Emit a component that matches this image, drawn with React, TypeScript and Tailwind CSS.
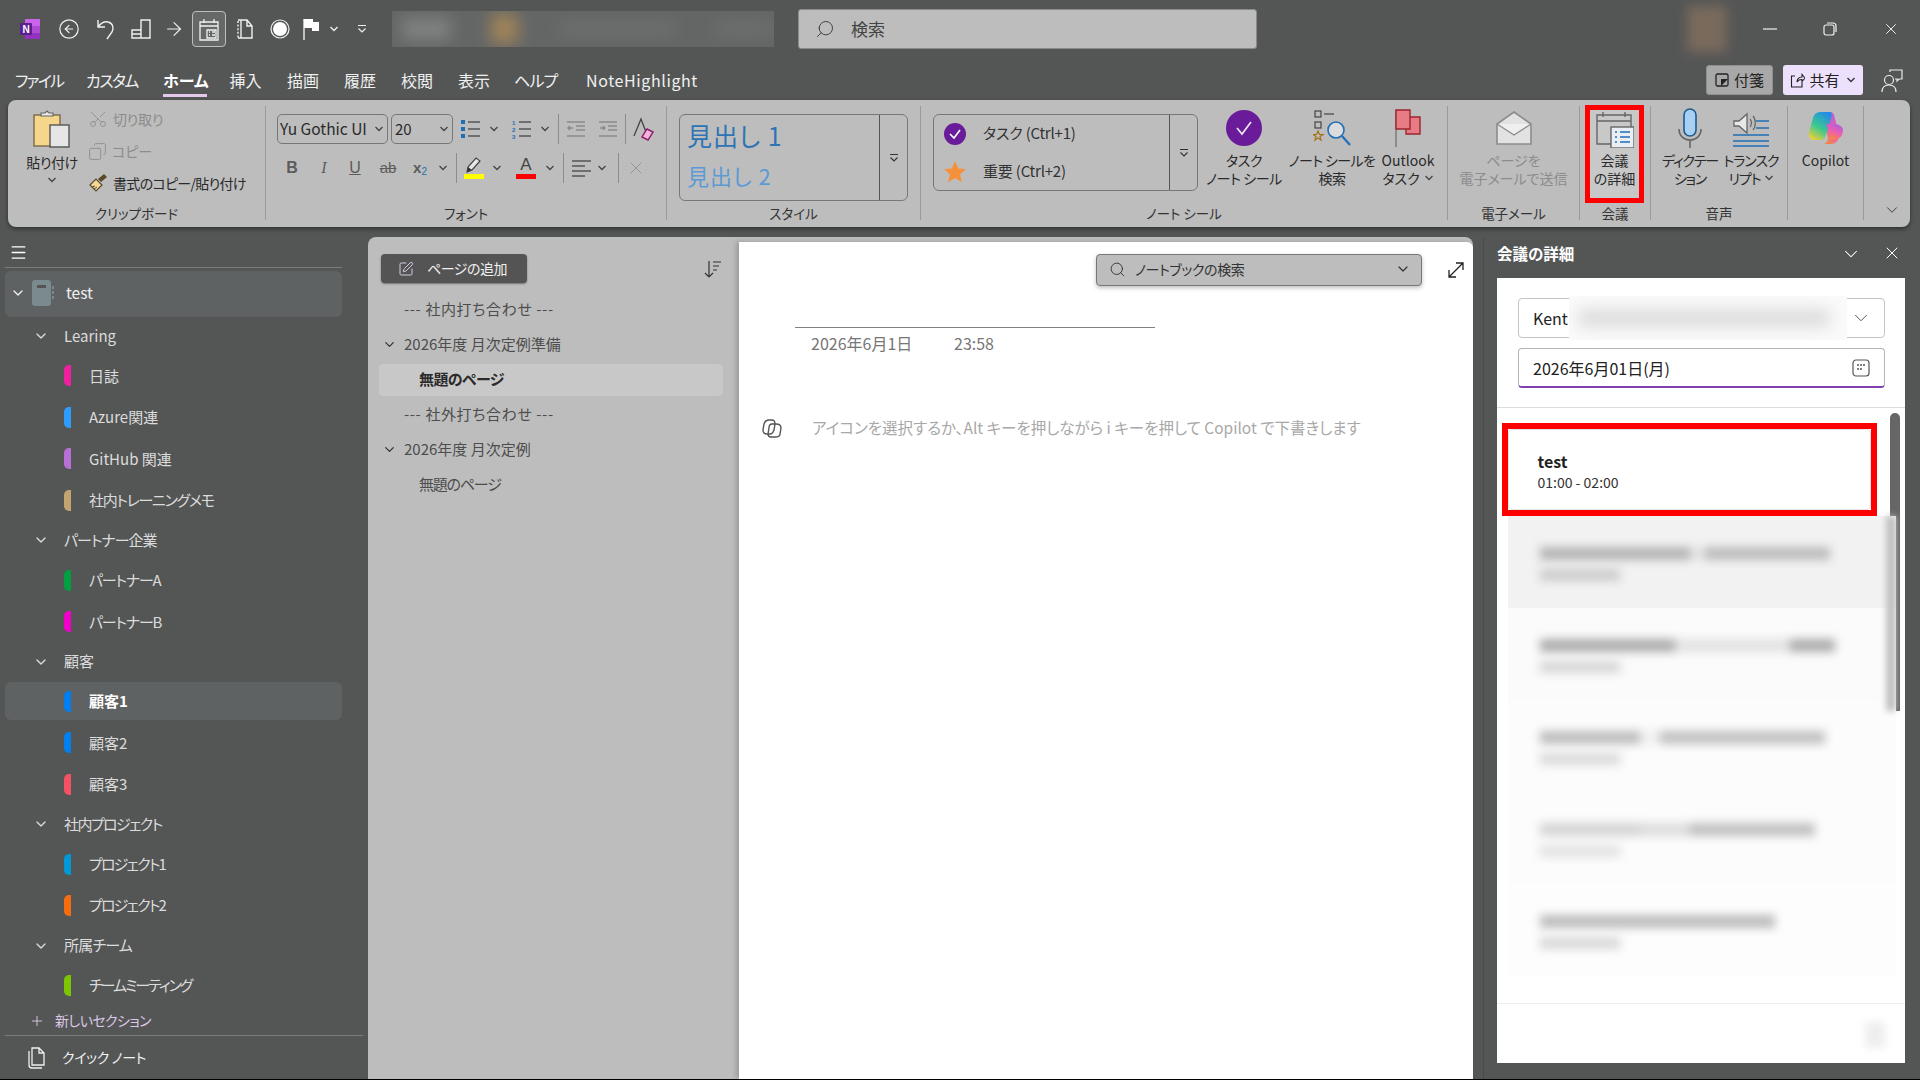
import React from 'react';
import { ArrowRight, ChevronDown, CircleArrowLeft, Copy, Menu, Plus, Scissors, Search, SquarePen, X } from 'lucide-react';

const tabs = [
  { label: 'ファイル', cls: 'ml-[15px] w-[47px] tracking-[-1.8px]' },
  { label: 'カスタム', cls: 'ml-[24px] w-[51px] tracking-[-1.6px]' },
  { label: 'ホーム', cls: 'ml-[26px] w-[44px]', active: true },
  { label: '挿入', cls: 'ml-[22px] w-[33px]' },
  { label: '描画', cls: 'ml-[24px] w-[34px]' },
  { label: '履歴', cls: 'ml-[23px] w-[34px]' },
  { label: '校閲', cls: 'ml-[23px] w-[34px]' },
  { label: '表示', cls: 'ml-[23px] w-[34px]' },
  { label: 'ヘルプ', cls: 'ml-[23px] w-[43px] tracking-[-0.8px]' },
  { label: 'NoteHighlight', cls: 'ml-[29px] w-[112px] tracking-[0.6px]' },
];

const sections = [
  { type: 'group', label: 'Learing' },
  { label: '日誌', color: 'bg-[#f01fa0]' },
  { label: 'Azure関連', color: 'bg-[#2e9bff]' },
  { label: 'GitHub 関連', color: 'bg-[#b86fd6]' },
  { label: '社内トレーニングメモ', color: 'bg-[#c4a373]', track: 'tracking-[-1.3px]' },
  { type: 'group', label: 'パートナー企業', track: 'tracking-[-1px]' },
  { label: 'パートナーA', color: 'bg-[#00a040]', track: 'tracking-[-1.2px]' },
  { label: 'パートナーB', color: 'bg-[#f000c8]', track: 'tracking-[-1.2px]' },
  { type: 'group', label: '顧客' },
  { label: '顧客1', color: 'bg-[#0080f0]', active: true },
  { label: '顧客2', color: 'bg-[#0080f0]' },
  { label: '顧客3', color: 'bg-[#f25262]' },
  { type: 'group', label: '社内プロジェクト', track: 'tracking-[-1.6px]' },
  { label: 'プロジェクト1', color: 'bg-[#0098d8]', track: 'tracking-[-1.8px]' },
  { label: 'プロジェクト2', color: 'bg-[#f76c10]', track: 'tracking-[-1.8px]' },
  { type: 'group', label: '所属チーム', track: 'tracking-[-0.8px]' },
  { label: 'チームミーティング', color: 'bg-[#7fc400]', track: 'tracking-[-2px]' },
];

const pages = [
  { label: '--- 社内打ち合わせ ---', indent: 'pl-[25px]', track: 'tracking-[0.6px]' },
  { label: '2026年度 月次定例準備', indent: 'pl-[25px]', chevron: true },
  { label: '無題のページ', indent: 'pl-[40px]', active: true, track: 'tracking-[-0.6px]' },
  { label: '--- 社外打ち合わせ ---', indent: 'pl-[25px]', track: 'tracking-[0.6px]' },
  { label: '2026年度 月次定例', indent: 'pl-[25px]', chevron: true },
  { label: '無題のページ', indent: 'pl-[40px]', track: 'tracking-[-1.2px]' },
];

const blurredRows = [
  { bg: 'bg-[#f2f2f2]', line: [{ w: 'w-[150px]', c: 'bg-[#b4b4b4]' }, { w: 'w-[15px]', c: 'bg-[#e2e2e2]' }, { w: 'w-[125px]', c: 'bg-[#bcbcbc]' }], sub: 'bg-[#cccccc]' },
  { bg: 'bg-[#fbfbfb]', line: [{ w: 'w-[135px]', c: 'bg-[#acacac]' }, { w: 'w-[115px]', c: 'bg-[#e2e2e2]' }, { w: 'w-[45px]', c: 'bg-[#acacac]' }], sub: 'bg-[#d6d6d6]' },
  { bg: 'bg-[#fcfcfc]', line: [{ w: 'w-[100px]', c: 'bg-[#bcbcbc]' }, { w: 'w-[20px]', c: 'bg-[#efefef]' }, { w: 'w-[165px]', c: 'bg-[#c0c0c0]' }], sub: 'bg-[#dadada]' },
  { bg: 'bg-[#fcfcfc]', line: [{ w: 'w-[100px]', c: 'bg-[#d4d4d4]' }, { w: 'w-[50px]', c: 'bg-[#dcdcdc]' }, { w: 'w-[125px]', c: 'bg-[#c0c0c0]' }], sub: 'bg-[#e2e2e2]' },
  { bg: 'bg-[#fdfdfd]', line: [{ w: 'w-[235px]', c: 'bg-[#bcbcbc]' }], sub: 'bg-[#d8d8d8]' },
];

const MiniChevron = ({ className = 'text-[#444]' }: { className?: string }) => (
  <svg width="10" height="6" viewBox="0 0 10 6" className={className}>
    <path d="M1.5 1l3.5 3.5L8.5 1" fill="none" stroke="currentColor" strokeWidth="1.3" />
  </svg>
);

const DropLine = ({ className = 'text-[#333]' }: { className?: string }) => (
  <svg width="10" height="10" viewBox="0 0 10 10" className={className}>
    <path d="M1 1.5h8M1.5 4.5L5 8l3.5-3.5" fill="none" stroke="currentColor" strokeWidth="1.1" />
  </svg>
);

const Divider = ({ ml }: { ml: string }) => <div className={`h-[30px] w-px bg-[#8c8c8c] ${ml}`} />;

const OneNoteLogo = () => (
  <svg width="20" height="20" viewBox="0 0 20 20" className="ml-[20px]">
    <rect x="5" y="0" width="15" height="7" fill="#ca64ea" />
    <rect x="5" y="7" width="15" height="7" fill="#ae4bd5" />
    <rect x="5" y="14" width="15" height="6" fill="#9332bf" />
    <rect x="0" y="4" width="12" height="12" rx="1" fill="#5c1e91" />
    <text x="6" y="14" textAnchor="middle" fontSize="10" fontWeight="700" fill="#fff" fontFamily="Liberation Sans">N</text>
  </svg>
);

const TitleBar = () => (
  <div className="flex h-[58px] items-center text-[#f0f0f0]">
    <OneNoteLogo />
    <CircleArrowLeft size={22} strokeWidth={1.3} className="ml-[18px]" />
    <svg width="20" height="22" viewBox="0 0 20 22" className="ml-[16px]" fill="none" stroke="currentColor" strokeWidth="1.4">
      <path d="M2 2v7h7M2 9c3-4 6-6 10-5 5 1 6 6 4 10l-5 7" />
    </svg>
    <svg width="20" height="22" viewBox="0 0 20 22" className="ml-[15px]" fill="none" stroke="currentColor" strokeWidth="1.4">
      <path d="M1 12h9v8H1zM10 16H1M10 12V2h9v18h-9" />
    </svg>
    <ArrowRight size={22} strokeWidth={1.2} className="ml-[12px]" />
    <div className="ml-[7px] flex h-[36px] w-[34px] items-center justify-center rounded-[4px] border border-[#bdbdbd] bg-[#666868]">
      <svg width="22" height="24" viewBox="0 0 22 24" fill="none" stroke="currentColor" strokeWidth="1.3">
        <path d="M2 5h18v18H2zM2 9h18M6 2v4M16 2v4" />
        <path d="M9 13h9v8H9z" fill="#666868" />
        <path d="M11 15h1M14 15h3M11 18h1M14 18h3" strokeWidth="1.6" />
      </svg>
    </div>
    <svg width="18" height="22" viewBox="0 0 18 22" className="ml-[10px]" fill="none" stroke="currentColor" strokeWidth="1.4">
      <path d="M2 3v17" strokeDasharray="2 1.6" />
      <path d="M2 2h6M2 20h14V8l-5-6H5v18M11 2v6h5" />
    </svg>
    <svg width="20" height="20" viewBox="0 0 20 20" className="ml-[16px]">
      <circle cx="10" cy="10" r="9" fill="none" stroke="#f0f0f0" strokeWidth="1.2" />
      <circle cx="10" cy="10" r="7" fill="#fff" />
    </svg>
    <svg width="16" height="22" viewBox="0 0 16 22" className="ml-[13px]">
      <path d="M1 1v21" stroke="#f0f0f0" strokeWidth="1.4" />
      <path d="M1 1h9l0 3h6v9H9v-3H1z" fill="#fff" />
    </svg>
    <MiniChevron className="ml-[10px] text-[#f0f0f0]" />
    <DropLine className="ml-[18px] text-[#f0f0f0]" />
    <div className="ml-[25px] h-[36px] w-[382px] overflow-hidden bg-[#646666]">
      <div className="flex h-full items-center gap-[40px] pl-[10px] blur-[8px]">
        <div className="h-[22px] w-[50px] bg-[#808282]" />
        <div className="h-[30px] w-[28px] bg-[#a08458]" />
        <div className="h-[14px] w-[120px] bg-[#6e7070]" />
        <div className="h-[14px] w-[60px] bg-[#6e7070]" />
      </div>
    </div>
    <div className="ml-[24px] flex h-[40px] w-[459px] items-center rounded-[3px] border border-[#8a8a8a] bg-[#bdbdbd] pl-[16px] text-[#444]">
      <Search size={20} strokeWidth={1.2} className="-scale-x-100" />
      <span className="ml-[16px] text-[17px]">検索</span>
    </div>
    <div className="ml-[430px] h-[46px] w-[40px] bg-[#7a6a5c] blur-[6px]" />
    <svg width="14" height="2" viewBox="0 0 14 2" className="ml-[36px]"><path d="M0 1h14" stroke="#f0f0f0" strokeWidth="1.2" /></svg>
    <svg width="14" height="14" viewBox="0 0 14 14" className="ml-[46px]" fill="none" stroke="#f0f0f0" strokeWidth="1.2">
      <rect x="1" y="3" width="10" height="10" rx="2" />
      <path d="M4 1h6a3 3 0 0 1 3 3v6" />
    </svg>
    <X size={18} strokeWidth={1.3} className="ml-[45px]" />
  </div>
);

const TabBar = () => (
  <div className="flex h-[42px] items-start">
    {tabs.map((t) => (
      <div key={t.label} className={`whitespace-nowrap border-b-[3px] pb-[4px] pt-[12px] text-center text-[16px] leading-[20px] ${t.active ? 'border-[#e3c8ec] font-bold text-white' : 'border-transparent text-[#f0f0f0]'} ${t.cls}`}>
        {t.label}
      </div>
    ))}
    <div className="ml-[1008px] mt-[7px] flex h-[30px] w-[67px] items-center justify-center gap-[5px] rounded-[3px] border border-[#8f8f8f] bg-[#a8a8a8] text-[15px] text-[#222]">
      <svg width="14" height="14" viewBox="0 0 14 14"><rect x="1" y="1" width="12" height="12" rx="1.5" fill="none" stroke="#222" strokeWidth="1.3" /><path d="M13 6L6 13V6z" fill="#222" /></svg>
      付箋
    </div>
    <div className="ml-[10px] mt-[7px] flex h-[30px] w-[80px] items-center justify-center gap-[4px] rounded-[3px] bg-[#ece0fc] text-[15px] text-[#222]">
      <svg width="15" height="15" viewBox="0 0 15 15" fill="none" stroke="#222" strokeWidth="1.1"><path d="M5 3H1.5v11H12V9M7 9c0-3 2-5 5-5V1.5l3 3.5-3 3.5V6.5C10 6.5 8 7 7 9z" /></svg>
      共有
      <MiniChevron className="ml-[2px] text-[#333]" />
    </div>
    <svg width="22" height="24" viewBox="0 0 22 24" className="ml-[18px] mt-[11px]" fill="none" stroke="#eaeaea" strokeWidth="1.2">
      <circle cx="8" cy="11" r="4.5" />
      <path d="M1 23c0-5 3-7 7-7s7 2 7 7M9 3V1h12v9h-3l-2 2v-2h-2" />
    </svg>
  </div>
);

const Group = ({ w, label, children }: { w: string; label: string; children: React.ReactNode }) => (
  <div className={`flex h-[114px] flex-col border-r border-[#9a9a9a] ${w}`}>
    <div className="flex-1">{children}</div>
    <div className="mb-[-2px] whitespace-nowrap text-center text-[13.5px] leading-[18px] text-[#333]">{label}</div>
  </div>
);

const BigBtn = ({ w, icon, lines, muted, track = '' }: { w: string; icon: React.ReactNode; lines: React.ReactNode[]; muted?: boolean; track?: string }) => (
  <div className={`flex flex-col items-center ${w}`}>
    <div className="flex h-[44px] items-center justify-center">{icon}</div>
    <div className={`mt-[1px] whitespace-nowrap text-center text-[14px] leading-[18px] ${track} ${muted ? 'text-[#8c8c8c]' : 'text-[#2a2a2a]'}`}>
      {lines.map((l, i) => <div key={i}>{l}</div>)}
    </div>
  </div>
);

const CopilotIcon = ({ size = 36 }: { size?: number }) => (
  <svg width={size} height={size} viewBox="0 0 36 36">
    <defs>
      <linearGradient id="cpL" x1="0.7" y1="0" x2="0.2" y2="1">
        <stop offset="0" stopColor="#1a8fe8" />
        <stop offset="0.55" stopColor="#35c98e" />
        <stop offset="1" stopColor="#f2d22e" />
      </linearGradient>
      <linearGradient id="cpR" x1="0.8" y1="0" x2="0.3" y2="1">
        <stop offset="0" stopColor="#b05de0" />
        <stop offset="0.55" stopColor="#ee5fae" />
        <stop offset="1" stopColor="#f58a3c" />
      </linearGradient>
    </defs>
    <path d="M12 2h10c2 0 3.5 1 4 3l5 19c1 4-2 10-8 10h-8c2 0 5-2 5-6L16 8c-1-3-2-4-4-6z" fill="url(#cpR)" />
    <path d="M13 2c-4 0-7 2-8 6L1 22c-1 4 1 8 5 8h6c3 0 5-2 6-5l5-16c1-4 1-7-1-7H13z" fill="url(#cpL)" opacity="0.95" />
    <path d="M18 14h8c4 0 8 2 9 5 0 7-3 10-8 10h-8c3-1 4-3 3-6z" fill="url(#cpR)" />
  </svg>
);

const Ribbon = () => (
  <div className="ml-[8px] flex h-[127px] w-[1902px] rounded-[8px] bg-[#bdbdbd] pt-[6px] shadow-[0_2px_4px_rgba(0,0,0,0.45)]">
    <Group w="w-[258px]" label="クリップボード">
      <div className="flex">
        <div className="ml-[14px] flex w-[60px] flex-col items-center pt-[4px]">
          <svg width="38" height="38" viewBox="0 0 38 38">
            <rect x="1" y="5" width="26" height="31" fill="#f6d68a" stroke="#7a6a48" strokeWidth="1.4" />
            <path d="M8 6V3h4l2-2 2 2h4v3z" fill="#e8e8e8" stroke="#666" strokeWidth="1.2" />
            <rect x="17" y="15" width="19" height="22" fill="#e6e6e6" stroke="#555" strokeWidth="1.4" />
          </svg>
          <div className="mt-[5px] whitespace-nowrap text-[14px] leading-[18px] tracking-[-0.5px] text-[#2a2a2a]">貼り付け</div>
          <MiniChevron className="mt-[6px] text-[#444]" />
        </div>
        <div className="ml-[6px] flex flex-col gap-[6px] text-[14px]">
          <div className="flex h-[26px] items-center text-[#8c8c8c]">
            <Scissors size={20} strokeWidth={1} className="-rotate-90" />
            <span className="ml-[5px] tracking-[-0.3px]">切り取り</span>
          </div>
          <div className="flex h-[26px] items-center text-[#8c8c8c]">
            <Copy size={19} strokeWidth={1.1} className="-scale-x-100" />
            <span className="ml-[5px]">コピー</span>
          </div>
          <div className="flex h-[26px] items-center text-[#2a2a2a]">
            <svg width="20" height="20" viewBox="0 0 20 20">
              <path d="M2 12l6-6 6 6-6 6z" fill="#f2d99a" stroke="#5a4a2a" strokeWidth="1.2" />
              <path d="M10 6l6-5 3 3-6 5z" fill="#5a4a2a" />
              <path d="M4 14l3-1M6 16l3-2" stroke="#5a4a2a" />
            </svg>
            <span className="ml-[5px] whitespace-nowrap tracking-[-0.7px]">書式のコピー/貼り付け</span>
          </div>
        </div>
      </div>
    </Group>
    <Group w="w-[401px]" label="フォント">
      <div className="flex h-[38px] items-start pl-[11px] pt-[8px]">
        <div className="flex h-[30px] w-[111px] items-center justify-between rounded-[5px] border border-[#777] pl-[2px] pr-[3px] text-[15.5px] text-[#2a2a2a]">
          <span className="whitespace-nowrap">Yu Gothic UI</span>
          <MiniChevron />
        </div>
        <div className="ml-[3px] flex h-[30px] w-[62px] items-center justify-between rounded-[5px] border border-[#777] pl-[3px] pr-[3px] text-[15px] text-[#2a2a2a]">
          20
          <MiniChevron />
        </div>
        <div className="flex h-[30px] items-center">
          <svg width="19" height="20" viewBox="0 0 19 20" className="ml-[8px]">
            <path d="M0 1h4v4H0zM0 8h4v4H0zM0 15h4v4H0z" fill="#1f6fb5" />
            <path d="M7 3h12M7 10h12M7 17h12" stroke="#555" strokeWidth="1.4" />
          </svg>
          <MiniChevron className="ml-[9px] text-[#444]" />
          <svg width="19" height="20" viewBox="0 0 19 20" className="ml-[13px]">
            <text x="0" y="6" fontSize="6" fontWeight="700" fill="#1f6fb5" fontFamily="Liberation Sans">1</text>
            <text x="0" y="13" fontSize="6" fontWeight="700" fill="#1f6fb5" fontFamily="Liberation Sans">2</text>
            <text x="0" y="20" fontSize="6" fontWeight="700" fill="#1f6fb5" fontFamily="Liberation Sans">3</text>
            <path d="M7 3h12M7 10h12M7 17h12" stroke="#555" strokeWidth="1.4" />
          </svg>
          <MiniChevron className="ml-[9px] text-[#444]" />
          <Divider ml="ml-[8px]" />
          <svg width="18" height="18" viewBox="0 0 18 18" className="ml-[8px]" fill="none" stroke="#8a8a8a" strokeWidth="1.3">
            <path d="M0 2h18M9 6h9M9 10h9M0 16h18M6 8H1M3 6L1 8l2 2" />
          </svg>
          <svg width="18" height="18" viewBox="0 0 18 18" className="ml-[14px]" fill="none" stroke="#8a8a8a" strokeWidth="1.3">
            <path d="M0 2h18M9 6h9M9 10h9M0 16h18M1 8h5M4 6l2 2-2 2" />
          </svg>
          <Divider ml="ml-[8px]" />
          <svg width="21" height="24" viewBox="0 0 21 24" className="ml-[7px]">
            <path d="M1 19L8 2l5 13" fill="none" stroke="#444" strokeWidth="1.3" />
            <path d="M14 12l6 3-5 8-6-3z" fill="#f2b5d8" stroke="#8b1a6b" strokeWidth="1.4" />
          </svg>
        </div>
      </div>
      <div className="mt-[9px] flex h-[30px] items-center text-[#5c5c5c]">
        <span className="ml-[18px] w-[16px] text-center text-[16px] font-bold [font-family:'Liberation_Sans',sans-serif]">B</span>
        <span className="ml-[16px] w-[16px] text-center text-[16px] italic [font-family:'Liberation_Serif',serif]">I</span>
        <span className="ml-[15px] w-[16px] text-center text-[16px] underline [font-family:'Liberation_Sans',sans-serif]">U</span>
        <span className="ml-[15px] w-[20px] text-center text-[15px] line-through [font-family:'Liberation_Sans',sans-serif]">ab</span>
        <span className="ml-[12px] w-[20px] text-center text-[15px] font-bold [font-family:'Liberation_Sans',sans-serif]">x<sub className="text-[10px] font-normal text-[#1f6fb5]">2</sub></span>
        <MiniChevron className="ml-[8px] text-[#444]" />
        <Divider ml="ml-[8px]" />
        <div className="ml-[7px] flex w-[20px] flex-col items-center">
          <svg width="18" height="16" viewBox="0 0 18 16"><path d="M2 15l1-5 8-9 4 3-8 9z" fill="#e8e8e8" stroke="#444" strokeWidth="1.2" /><path d="M2 15l1-5 4 3z" fill="#333" /></svg>
          <div className="mt-[1px] h-[5px] w-[20px] bg-[#ffff00]" />
        </div>
        <MiniChevron className="ml-[8px] text-[#444]" />
        <div className="ml-[14px] flex w-[20px] flex-col items-center leading-none">
          <span className="text-[17px] leading-[16px] text-[#444] [font-family:'Liberation_Sans',sans-serif]">A</span>
          <div className="mt-[1px] h-[5px] w-[20px] bg-[#ff0000]" />
        </div>
        <MiniChevron className="ml-[9px] text-[#444]" />
        <Divider ml="ml-[8px]" />
        <svg width="19" height="18" viewBox="0 0 19 18" className="ml-[8px]" stroke="#555" strokeWidth="1.5"><path d="M0 2h19M0 7h13M0 12h19M0 17h13" /></svg>
        <MiniChevron className="ml-[6px] text-[#444]" />
        <Divider ml="ml-[11px]" />
        <X size={20} strokeWidth={1} className="ml-[7px] text-[#8c8c8c]" />
      </div>
    </Group>
    <Group w="w-[254px]" label="スタイル">
      <div className="ml-[12px] mt-[8px] flex h-[87px] w-[229px] rounded-[6px] border border-[#777]">
        <div className="flex-1 pl-[7px] pt-[0px]">
          <div className="whitespace-nowrap text-[25px] leading-[40px] tracking-[1px] text-[#2e74b5]">見出し 1</div>
          <div className="whitespace-nowrap text-[22px] leading-[40px] tracking-[1px] text-[#5b9bd5]">見出し 2</div>
        </div>
        <div className="flex w-[28px] items-center justify-center border-l border-[#555]">
          <DropLine />
        </div>
      </div>
    </Group>
    <Group w="w-[527px]" label="ノート シール">
      <div className="flex">
        <div className="ml-[12px] mt-[8px] flex h-[77px] w-[265px] rounded-[6px] border border-[#777]">
          <div className="flex-1 text-[15px] tracking-[-0.2px] text-[#333]">
            <div className="flex h-[38px] items-center pl-[9px]">
              <svg width="24" height="24" viewBox="0 0 24 24"><circle cx="12" cy="12" r="11" fill="#6a1b9a" /><path d="M7 12l4 4 6-8" fill="none" stroke="#fff" strokeWidth="1.6" /></svg>
              <span className="ml-[16px] mt-[-2px] whitespace-nowrap">タスク (Ctrl+1)</span>
            </div>
            <div className="flex h-[38px] items-center pl-[9px]">
              <svg width="24" height="24" viewBox="0 0 24 24"><path d="M12 1l3.2 7.4 7.8.7-5.9 5.2 1.8 7.9L12 18.1l-6.9 4.1 1.8-7.9L1 9.1l7.8-.7z" fill="#f5913a" /></svg>
              <span className="ml-[16px] mt-[-2px] whitespace-nowrap">重要 (Ctrl+2)</span>
            </div>
          </div>
          <div className="flex w-[28px] items-center justify-center border-l border-[#555]">
            <DropLine />
          </div>
        </div>
        <BigBtn
          w="ml-[8px] w-[76px]"
          icon={<svg width="36" height="36" viewBox="0 0 36 36"><circle cx="18" cy="18" r="18" fill="#6a1b9a" /><path d="M11 18l5 6 9-12" fill="none" stroke="#e8e0f0" strokeWidth="1.8" /></svg>}
          lines={['タスク', 'ノート シール']}
          track="tracking-[-0.4px]"
        />
        <BigBtn
          w="ml-[5px] w-[90px]"
          icon={
            <svg width="38" height="38" viewBox="0 0 38 38" fill="none">
              <rect x="2" y="2" width="6" height="6" stroke="#444" strokeWidth="1.2" />
              <path d="M11 5h10" stroke="#444" strokeWidth="1.2" />
              <rect x="2" y="13" width="6" height="6" stroke="#444" strokeWidth="1.2" />
              <path d="M5 22l1.5 3.5H10l-3 2 1 3.5-3-2-3 2 1-3.5-3-2h3.5z" stroke="#a5721a" strokeWidth="1.2" />
              <circle cx="23" cy="21" r="8" fill="#dcdcdc" stroke="#1f6fb5" strokeWidth="1.6" />
              <path d="M29 27l8 9" stroke="#1f6fb5" strokeWidth="2.2" />
            </svg>
          }
          lines={['ノート シールを', '検索']}
          track="tracking-[-0.6px]"
        />
        <BigBtn
          w="ml-[1px] w-[60px]"
          icon={
            <svg width="26" height="38" viewBox="0 0 26 38">
              <path d="M1 1v37" stroke="#777" strokeWidth="1.4" />
              <path d="M11 8h14v17H11z" fill="#e87c84" stroke="#9c2430" strokeWidth="1.4" />
              <path d="M1 1h14v19H1z" fill="#e87c84" stroke="#9c2430" strokeWidth="1.4" />
            </svg>
          }
          lines={['Outlook', <span key="t" className="inline-flex items-center gap-[4px]">タスク<MiniChevron /></span>]}
        />
      </div>
    </Group>
    <Group w="w-[132px]" label="電子メール">
      <BigBtn
        w="w-full"
        muted
        icon={
          <svg width="36" height="36" viewBox="0 0 36 36">
            <path d="M1 14L18 2l17 12v20H1z" fill="#e2e2e2" stroke="#8c8c8c" strokeWidth="1.6" />
            <path d="M1 14l17 11 17-11" fill="#efefef" stroke="#8c8c8c" strokeWidth="1.4" />
          </svg>
        }
        lines={['ページを', '電子メールで送信']}
      />
    </Group>
    <Group w="w-[71px]" label="会議">
      <div className="ml-[5px] mt-[-1px] flex h-[98px] w-[59px] flex-col items-center border-[5px] border-[#ff0000] bg-[#c8c8c8]">
        <div className="flex h-[40px] items-center">
          <svg width="38" height="36" viewBox="0 0 38 36" fill="none">
            <path d="M1 3h34v29H1zM1 9h34M7 0v5M29 0v5" stroke="#666" strokeWidth="1.4" />
            <rect x="15" y="15" width="23" height="21" fill="#e8eef4" stroke="#666" strokeWidth="1.4" />
            <path d="M19 20h2M19 25h2M19 30h2M24 20h10M24 25h10M24 30h10" stroke="#1f6fb5" strokeWidth="1.6" />
          </svg>
        </div>
        <div className="mt-[1px] whitespace-nowrap text-center text-[14px] leading-[18px] text-[#2a2a2a]">
          <div>会議</div>
          <div>の詳細</div>
        </div>
      </div>
    </Group>
    <Group w="w-[137px]" label="音声">
      <div className="flex">
        <BigBtn
          w="ml-[8px] w-[62px]"
          icon={
            <svg width="24" height="40" viewBox="0 0 24 40" fill="none">
              <rect x="6" y="1" width="12" height="27" rx="6" fill="#a8d0f2" stroke="#1d5a8e" strokeWidth="1.6" />
              <path d="M1 21c0 7 5 11 11 11s11-4 11-11M12 32v8" stroke="#666" strokeWidth="1.6" />
            </svg>
          }
          lines={['ディクテー', 'ション']}
          track="tracking-[-1.2px]"
        />
        <BigBtn
          w="w-[60px]"
          icon={
            <svg width="36" height="38" viewBox="0 0 36 38" fill="none">
              <path d="M1 12h5l8-7v19l-8-7H1z" fill="#e8e8e8" stroke="#666" strokeWidth="1.3" />
              <path d="M17 10c2 2 2 6 0 8M20 7c3 3 3 11 0 14" stroke="#666" strokeWidth="1.2" />
              <path d="M23 12h13M23 19h13M0 26h36M0 32h36M0 37h36" stroke="#1f6fb5" strokeWidth="1.4" />
            </svg>
          }
          lines={['トランスク', <span key="r" className="inline-flex items-center gap-[3px]">リプト<MiniChevron /></span>]}
          track="tracking-[-1px]"
        />
      </div>
    </Group>
    <Group w="w-[76px]" label=" ">
      <BigBtn w="w-full" icon={<CopilotIcon />} lines={['Copilot']} />
    </Group>
    <div className="flex h-[114px] flex-1 items-end justify-center pb-[1px] pl-[10px]">
      <ChevronDown size={18} strokeWidth={1.2} className="text-[#333]" />
    </div>
  </div>
);

const Sidebar = () => (
  <div className="flex w-[368px] flex-col">
    <div className="flex h-[30px] items-center pl-[9px] text-white">
      <Menu size={19} strokeWidth={1.6} />
    </div>
    <div className="ml-[5px] h-px w-[337px] bg-[#7a7a7a]" />
    <div className="ml-[5px] mt-[3px] flex h-[46px] w-[337px] items-center rounded-[6px] bg-[#5f6262] pb-[2px] text-[15.5px] text-[#f0f0f0]">
      <ChevronDown size={16} strokeWidth={2} className="ml-[5px]" />
      <svg width="22" height="26" viewBox="0 0 22 26" className="ml-[6px]">
        <rect x="0" y="0" width="19" height="26" rx="3" fill="#7a8a8e" />
        <rect x="5" y="5" width="9" height="3" fill="#555" />
        <path d="M21 6v3M21 11v3M21 16v3" stroke="#7a8a8e" strokeWidth="2" />
      </svg>
      <span className="ml-[12px]">test</span>
    </div>
    <div className="flex flex-col">
      {sections.map((s) =>
        s.type === 'group' ? (
          <div key={s.label} className="flex h-[38px] items-center text-[15px] text-[#dcdcdc]">
            <ChevronDown size={16} strokeWidth={2} className="ml-[33px]" />
            <span className={`ml-[15px] whitespace-nowrap ${s.track ?? ''}`}>{s.label}</span>
          </div>
        ) : (
          <div key={s.label} className="flex h-[41.6px] items-center">
            <div className={`ml-[5px] flex h-[38px] w-[337px] items-center rounded-[6px] pl-[59px] text-[15px] ${s.active ? 'bg-[#5f6262] font-bold text-white' : 'text-[#dcdcdc]'}`}>
              <div className={`h-[21px] w-[7px] rounded-l-[5px] ${s.color}`} />
              <span className={`ml-[18px] whitespace-nowrap ${s.track ?? ''}`}>{s.label}</span>
            </div>
          </div>
        )
      )}
    </div>
    <div className="flex h-[29px] items-center text-[14px] tracking-[-0.6px] text-[#dcc6e6]">
      <Plus size={16} strokeWidth={1.4} className="ml-[29px]" />
      <span className="ml-[10px]">新しいセクション</span>
    </div>
    <div className="ml-[5px] h-px w-[358px] bg-[#7a7a7a]" />
    <div className="flex flex-1 items-center text-[14px] text-[#f0f0f0]">
      <svg width="18" height="22" viewBox="0 0 18 22" className="ml-[28px]" fill="none" stroke="#f0f0f0" strokeWidth="1.3">
        <path d="M1 4v14c0 2 1 3 3 3h10" />
        <path d="M4 1h7l5 5v12H4zM11 1v5h5" />
      </svg>
      <span className="ml-[16px] tracking-[-0.4px]">クイック ノート</span>
    </div>
  </div>
);

const PageList = () => (
  <div className="flex w-[371px] flex-col">
    <div className="flex pl-[13px] pt-[17px]">
      <div className="flex h-[29px] w-[146px] items-center rounded-[4px] bg-[#545454] pl-[17px] text-[14px] text-[#f0f0f0] shadow-[0_1px_2px_rgba(0,0,0,0.4)]">
        <SquarePen size={16} strokeWidth={1.4} className="text-[#e3d4f2]" />
        <span className="ml-[13px] whitespace-nowrap tracking-[-0.5px]">ページの追加</span>
      </div>
      <svg width="18" height="18" viewBox="0 0 18 18" className="ml-[177px] mt-[6px]" fill="none" stroke="#333" strokeWidth="1.2">
        <path d="M5 1v16M1 13l4 4 4-4M9 2h8M9 6h6M9 10h4" />
      </svg>
    </div>
    <div className="mt-[9px] flex flex-col pl-[11px] text-[15px] text-[#4d4d4d]">
      {pages.map((p, i) => (
        <div key={i} className={`relative flex h-[35px] w-[344px] items-center ${p.indent}`}>
          {p.chevron && <ChevronDown size={15} strokeWidth={2} className="absolute left-[3px] top-[10px] text-[#333]" />}
          {p.active && <div className="absolute inset-x-0 top-[1.5px] h-[32px] rounded-[4px] bg-[#c8c8c8]" />}
          <span className={`relative whitespace-nowrap ${p.track ?? ''} ${p.active ? 'font-bold text-[#2a2a2a]' : ''}`}>{p.label}</span>
        </div>
      ))}
    </div>
  </div>
);

const NotePane = () => (
  <div className="mt-[5px] flex w-[734px] flex-col rounded-tr-[6px] bg-white shadow-[-3px_0_5px_rgba(0,0,0,0.18)]">
    <div className="ml-[357px] mt-[12px] flex items-center">
      <div className="flex h-[32px] w-[326px] items-center rounded-[4px] border border-[#777] bg-[#bdbdbd] pb-[2px] pl-[12px] pr-[10px] text-[14px] text-[#333] shadow-[0_2px_4px_rgba(0,0,0,0.25)]">
        <Search size={17} strokeWidth={1.3} />
        <span className="ml-[9px] whitespace-nowrap tracking-[-0.4px]">ノートブックの検索</span>
        <ChevronDown size={16} strokeWidth={1.8} className="ml-auto" />
      </div>
      <svg width="18" height="18" viewBox="0 0 18 18" className="ml-[25px]" fill="none" stroke="#222" strokeWidth="1.3">
        <path d="M2 16L16 2M9 2h7v7M2 9v7h7" />
      </svg>
    </div>
    <div className="ml-[56px] mt-[41px] h-px w-[360px] bg-[#808080]" />
    <div className="ml-[72px] mt-[6px] flex h-[18px] items-center text-[16px] text-[#767676]">
      <span className="w-[143px] whitespace-nowrap">2026年6月1日</span>
      <span>23:58</span>
    </div>
    <div className="ml-[23px] mt-[66px] flex h-[20px] items-center">
      <svg width="20" height="20" viewBox="0 0 20 20" fill="none" stroke="#555" strokeWidth="1.4">
        <path d="M7 2c-3 0-4 1-5 4L1 12c0 3 2 4 4 4h3c2 0 3-1 4-4l1-6c0-3-1-4-3-4z" />
        <path d="M10 6h4c3 0 5 1 5 4l-1 6c0 2-2 3-5 3H9c-2 0-3-1-3-3l1-6c0-3 1-4 3-4z" />
      </svg>
      <span className="ml-[30px] whitespace-nowrap text-[15.5px] text-[#a8a8a8]">アイコンを選択するか、Alt キーを押しながら i キーを押して Copilot で下書きします</span>
    </div>
  </div>
);

const MeetingPanel = () => (
  <div className="ml-[10px] flex w-[437px] flex-col border-l border-[#4a4a4a] pl-[13px]">
    <div className="flex h-[41px] items-start pr-[18px] pt-[6px] text-white">
      <span className="text-[15.5px] font-bold leading-[20px]">会議の詳細</span>
      <ChevronDown size={22} strokeWidth={1.1} className="ml-auto" />
      <X size={20} strokeWidth={1.2} className="ml-[20px]" />
    </div>
    <div className="relative h-[785px] w-[408px] overflow-hidden bg-white">
      <div className="relative ml-[21px] mt-[20px] flex h-[40px] w-[367px] items-center rounded-[4px] border border-[#c4c4c4] pl-[14px] text-[16px] text-[#222]">
        Kent
        <div className="absolute left-[50px] top-[-3px] h-[44px] w-[278px] overflow-hidden bg-[#fafafa]">
          <div className="ml-[10px] mt-[14px] h-[16px] w-[250px] bg-[#d8d8d8] blur-[8px]" />
        </div>
        <ChevronDown size={22} strokeWidth={1} className="ml-auto mr-[12px] text-[#444]" />
      </div>
      <div className="ml-[21px] mt-[10px] flex h-[40px] w-[367px] items-center rounded-[4px] border border-b-2 border-[#b4b4b4] border-b-[#8040b0] pl-[14px] text-[16px] text-[#222]">
        2026年6月01日(月)
        <svg width="18" height="18" viewBox="0 0 18 18" className="ml-auto mr-[14px]" fill="none" stroke="#555" strokeWidth="1.2">
          <rect x="1" y="1" width="16" height="16" rx="3" />
          <path d="M5 6h2M8 6h2M11 6h2M5 10h2M8 10h2" strokeWidth="1.4" />
        </svg>
      </div>
      <div className="mt-[19px] h-px bg-[#dcdcdc]" />
      <div className="ml-[4.5px] mt-[15px] h-[93px] w-[375px] border-[6px] border-[#ff0000]">
        <div className="h-full rounded-[4px] border border-[#e4e4e4] bg-white pl-[29px] pt-[20px]">
          <div className="text-[16px] font-bold leading-[22px] text-[#222]">test</div>
          <div className="text-[14px] leading-[20px] text-[#333]">01:00 - 02:00</div>
        </div>
      </div>
      <div className="ml-[11px] h-[487px] w-[388px] overflow-hidden">
        {blurredRows.map((r, i) => (
          <div key={i} className={`h-[92px] overflow-hidden px-[32px] pt-[31px] ${r.bg}`}>
            <div className="flex blur-[5px]">
              {r.line.map((seg, j) => <div key={j} className={`h-[13px] ${seg.w} ${seg.c}`} />)}
            </div>
            <div className="mt-[9px] h-[12px] w-[80px] blur-[5px]">
              <div className={`h-full ${r.sub}`} />
            </div>
          </div>
        ))}
      </div>
      <div className="border-t border-[#eeeeee] pr-[20px] pt-[18px]">
        <div className="ml-auto h-[26px] w-[20px] bg-[#eeeeee] blur-[4px]" />
      </div>
      <div className="absolute right-[5px] top-[135px] h-[103px] w-[10px] rounded-t-[5px] bg-[#666]" />
      <div className="absolute right-[5px] top-[238px] h-[195px] w-[4px] bg-[#666]" />
      <div className="absolute right-[9px] top-[238px] h-[195px] w-[10px] bg-[#c0c0c0] blur-[3px]" />
    </div>
  </div>
);

export default function App() {
  return (
    <div className="flex h-[1080px] w-[1920px] flex-col overflow-hidden bg-[#545656] [font-family:'Noto_Sans_CJK_JP','Noto_Sans',sans-serif] [font-feature-settings:'palt']">
      <TitleBar />
      <TabBar />
      <Ribbon />
      <div className="mt-[10px] flex h-[843px] border-b border-black">
        <Sidebar />
        <div className="flex w-[1105px] rounded-t-[8px] bg-[#bdbdbd]">
          <PageList />
          <NotePane />
        </div>
        <MeetingPanel />
      </div>
    </div>
  );
}
